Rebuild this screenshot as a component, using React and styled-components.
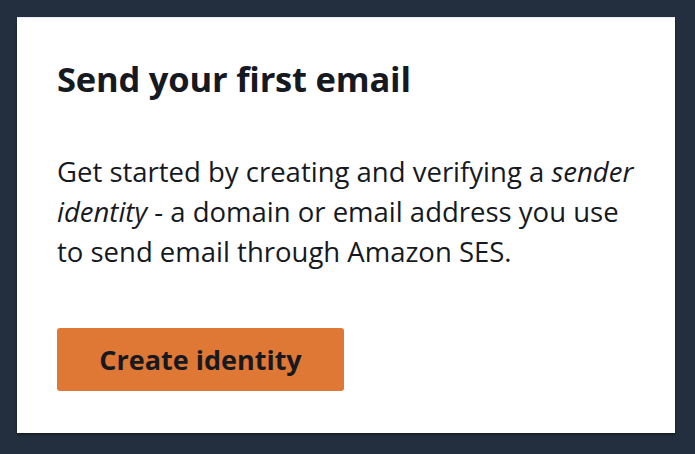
import React from "react"
import styled, { createGlobalStyle } from "styled-components"

const GlobalStyle = createGlobalStyle`
	html, body {
		margin: 0;
		padding: 0;
		background: #232f3e;
	}
	body {
		font-family: "Open Sans", "Noto Sans", sans-serif;
		color: #16191f;
	}
`;

const Page = styled.div`
	width: 695px;
	height: 454px;
	box-sizing: border-box;
	padding: 17px 20px 21px 17px;
	background: #232f3e;
`;

const Card = styled.div`
	width: 658px;
	height: 416px;
	box-sizing: border-box;
	background: #fff;
	border-top: 1px solid #eaeded;
	box-shadow: 0 2px 2px rgba(0, 0, 0, 0.35);
	padding: 36px 38px 0 40px;
	display: flex;
	flex-direction: column;
	align-items: flex-start;
`;

const Title = styled.h2`
	margin: 0;
	font-size: 34.5px;
	line-height: 50px;
	font-weight: 700;
	letter-spacing: -0.2px;
`;

const Body = styled.p`
	margin: 48px 0 0 0;
	font-size: 27.5px;
	line-height: 40px;
	font-weight: 400;

	em {
		font-style: italic;
	}
`;

const PrimaryButton = styled.button`
	margin-top: 56px;
	width: 287px;
	height: 63px;
	border: none;
	border-radius: 3px;
	background: #df7834;
	color: #16191f;
	font-family: inherit;
	font-size: 27px;
	font-weight: 700;
	cursor: pointer;
`;

const App = () => (
	<>
		<GlobalStyle />
		<Page>
			<Card>
				<Title>Send your first email</Title>
				<Body>
					Get started by creating and verifying a <em>sender identity</em> - a domain or email address you use to send email through Amazon SES.
				</Body>
				<PrimaryButton>Create identity</PrimaryButton>
			</Card>
		</Page>
	</>
);

export default App;
